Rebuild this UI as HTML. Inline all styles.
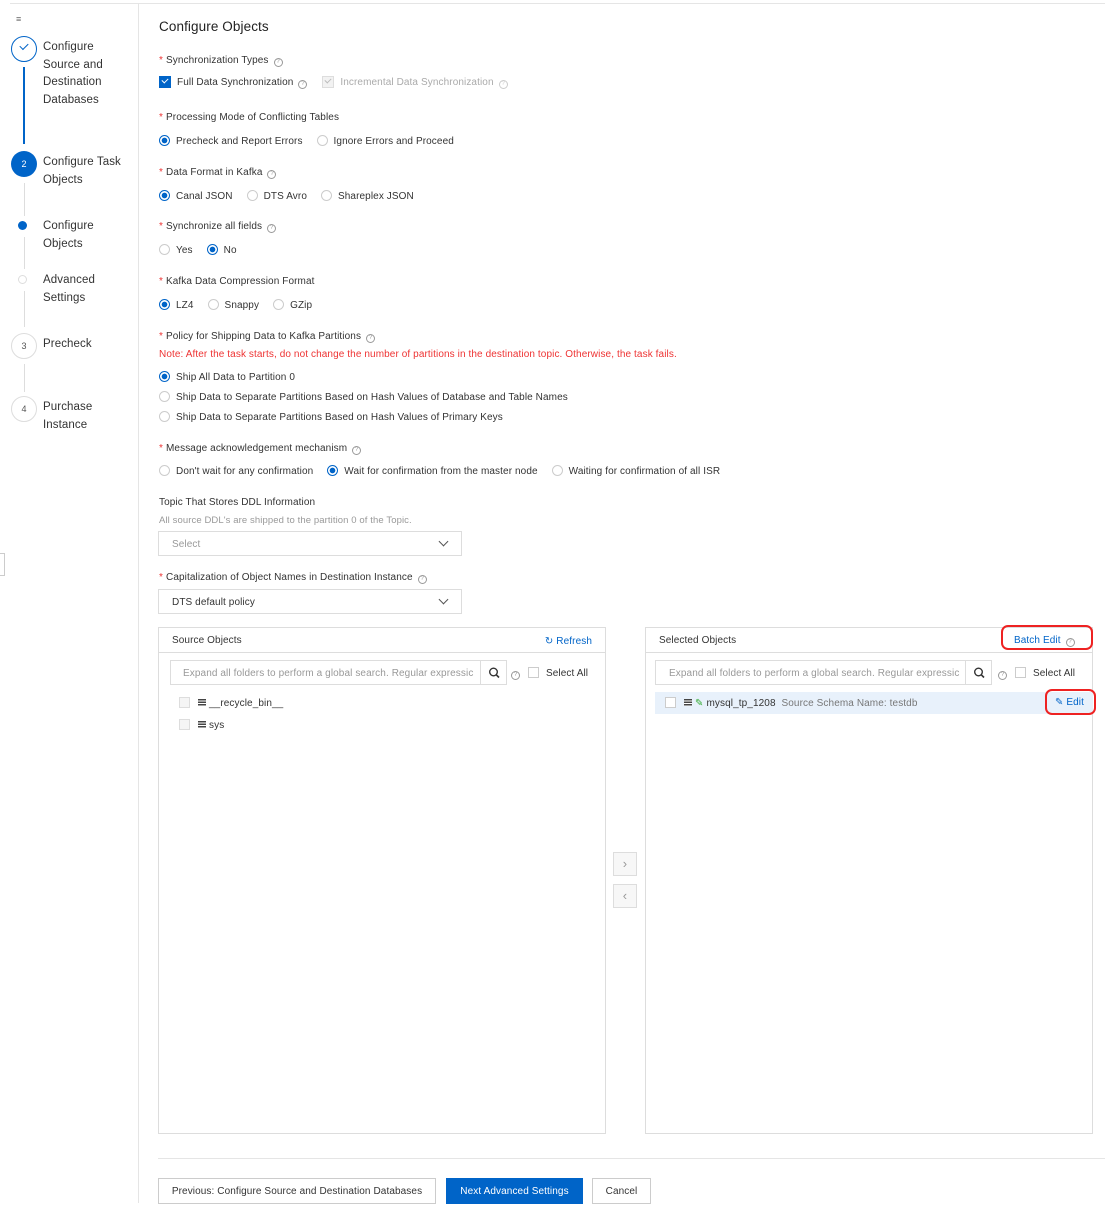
<!DOCTYPE html>
<html><head><meta charset="utf-8"><style>
*{box-sizing:border-box;margin:0;padding:0}
body{width:1105px;height:1209px;background:#fff;font-family:"Liberation Sans",sans-serif;color:#333;position:relative;overflow:hidden;font-size:10px;letter-spacing:0.1px}
.a{position:absolute;white-space:nowrap}
.st{font-size:11.5px;color:#333;line-height:17.5px;letter-spacing:0.1px}
.lbl{font-size:10px;color:#333;margin-top:1px}
.req{color:#e33;margin-right:3px}
.q{display:inline-block;width:9px;height:9px;border:1px solid #999;border-radius:50%;font-size:6px;line-height:7px;text-align:center;color:#999;vertical-align:0px;margin-left:5px;letter-spacing:0}
.r{display:inline-block;width:11px;height:11px;border:1px solid #ccc;border-radius:50%;vertical-align:-2px;margin-right:6px;background:#fff}
.r.on{border-color:#0064c8;background:radial-gradient(circle,#0064c8 0 2.6px,#fff 3px)}
.opt{margin-right:14px}
.sel{position:absolute;border:1px solid #ddd;height:25px;font-size:10px;padding:7px 13px}
.chev{position:absolute;right:14px;top:6px;width:7px;height:7px;border-right:1.3px solid #555;border-bottom:1.3px solid #555;transform:rotate(45deg)}
.panel{position:absolute;border:1px solid #ddd}
.cb{display:inline-block;width:11px;height:11px;border:1px solid #ccc;background:#fff;vertical-align:-2px}
.btn{position:absolute;top:1178px;height:26px;border:1px solid #ccc;font-size:10px;text-align:center;line-height:25px;background:#fff}
.dbi{display:inline-block;width:8px;height:7px;background:repeating-linear-gradient(#444 0 1.5px,#fff 1.5px 2.5px);vertical-align:0;margin-right:3px}
.ph{white-space:nowrap}
</style></head><body>
<div class="a" style="left:10px;top:3px;width:1095px;height:1px;background:#e5e5e5"></div>
<div class="a" style="left:138px;top:3px;width:1px;height:1200px;background:#e5e5e5"></div>
<div class="a" style="left:0;top:553px;width:5px;height:23px;border:1px solid #ccc;border-left:none"></div>
<!-- sidebar -->
<div class="a" style="left:16px;top:14px;font-size:9px;color:#666">≡</div>
<div class="a" style="left:11px;top:36px;width:26px;height:26px;border:1.3px solid #0064c8;border-radius:50%"></div>
<div class="a" style="left:20px;top:43px;width:8px;height:5px;border-left:1.3px solid #0064c8;border-bottom:1.3px solid #0064c8;transform:rotate(-45deg)"></div>
<div class="a st" style="left:43px;top:39px">Configure<br>Source and<br>Destination<br>Databases</div>
<div class="a" style="left:23px;top:67px;width:1.5px;height:77px;background:#0064c8"></div>
<div class="a" style="left:11px;top:151px;width:26px;height:26px;background:#0064c8;border-radius:50%;color:#fff;font-size:9px;text-align:center;line-height:26px">2</div>
<div class="a st" style="left:43px;top:154px">Configure Task<br>Objects</div>
<div class="a" style="left:24px;top:183px;width:1px;height:33px;background:#ddd"></div>
<div class="a" style="left:18px;top:221px;width:9px;height:9px;background:#0064c8;border-radius:50%"></div>
<div class="a st" style="left:43px;top:218px">Configure<br>Objects</div>
<div class="a" style="left:24px;top:237px;width:1px;height:32px;background:#ddd"></div>
<div class="a" style="left:18px;top:275px;width:9px;height:9px;border:1px solid #ddd;border-radius:50%"></div>
<div class="a st" style="left:43px;top:272px">Advanced<br>Settings</div>
<div class="a" style="left:24px;top:291px;width:1px;height:36px;background:#ddd"></div>
<div class="a" style="left:11px;top:333px;width:26px;height:26px;border:1px solid #ddd;border-radius:50%;font-size:9px;text-align:center;line-height:24px;color:#555">3</div>
<div class="a st" style="left:43px;top:336px">Precheck</div>
<div class="a" style="left:24px;top:364px;width:1px;height:28px;background:#ddd"></div>
<div class="a" style="left:11px;top:396px;width:26px;height:26px;border:1px solid #ddd;border-radius:50%;font-size:9px;text-align:center;line-height:24px;color:#555">4</div>
<div class="a st" style="left:43px;top:399px">Purchase<br>Instance</div>
<!-- main -->
<div class="a" style="left:159px;top:19px;font-size:13.5px;color:#222;letter-spacing:0.1px">Configure Objects</div>
<div class="a lbl" style="left:159px;top:54px"><span class="req">*</span>Synchronization Types<span class="q">?</span></div>
<div class="a lbl" style="left:159px;top:75px"><span style="display:inline-block;width:12px;height:12px;background:#0064c8;vertical-align:-3px;margin-right:6px;position:relative"><span style="position:absolute;left:3px;top:2px;width:6px;height:4px;border-left:1.5px solid #fff;border-bottom:1.5px solid #fff;transform:rotate(-45deg)"></span></span>Full Data Synchronization<span class="q">?</span>
<span style="display:inline-block;width:12px;height:12px;background:#f2f2f2;border:1px solid #ddd;vertical-align:-3px;margin:0 6px 0 12px;position:relative"><span style="position:absolute;left:2px;top:1px;width:6px;height:4px;border-left:1.3px solid #bbb;border-bottom:1.3px solid #bbb;transform:rotate(-45deg)"></span></span><span style="color:#aaa">Incremental Data Synchronization</span><span class="q" style="border-color:#ccc;color:#ccc">?</span></div>
<div class="a lbl" style="left:159px;top:111px"><span class="req">*</span>Processing Mode of Conflicting Tables</div>
<div class="a lbl" style="left:159px;top:134px"><span class="r on"></span><span class="opt">Precheck and Report Errors</span><span class="r"></span>Ignore Errors and Proceed</div>
<div class="a lbl" style="left:159px;top:166px"><span class="req">*</span>Data Format in Kafka<span class="q">?</span></div>
<div class="a lbl" style="left:159px;top:189px"><span class="r on"></span><span class="opt">Canal JSON</span><span class="r"></span><span class="opt">DTS Avro</span><span class="r"></span>Shareplex JSON</div>
<div class="a lbl" style="left:159px;top:220px"><span class="req">*</span>Synchronize all fields<span class="q">?</span></div>
<div class="a lbl" style="left:159px;top:243px"><span class="r"></span><span class="opt">Yes</span><span class="r on"></span>No</div>
<div class="a lbl" style="left:159px;top:275px"><span class="req">*</span>Kafka Data Compression Format</div>
<div class="a lbl" style="left:159px;top:298px"><span class="r on"></span><span class="opt">LZ4</span><span class="r"></span><span class="opt">Snappy</span><span class="r"></span>GZip</div>
<div class="a lbl" style="left:159px;top:330px"><span class="req">*</span>Policy for Shipping Data to Kafka Partitions<span class="q">?</span></div>
<div class="a lbl" style="left:159px;top:348px;color:#e33">Note: After the task starts, do not change the number of partitions in the destination topic. Otherwise, the task fails.</div>
<div class="a lbl" style="left:159px;top:370px"><span class="r on"></span>Ship All Data to Partition 0</div>
<div class="a lbl" style="left:159px;top:390px"><span class="r"></span>Ship Data to Separate Partitions Based on Hash Values of Database and Table Names</div>
<div class="a lbl" style="left:159px;top:410px"><span class="r"></span>Ship Data to Separate Partitions Based on Hash Values of Primary Keys</div>
<div class="a lbl" style="left:159px;top:442px"><span class="req">*</span>Message acknowledgement mechanism<span class="q">?</span></div>
<div class="a lbl" style="left:159px;top:464px"><span class="r"></span><span class="opt">Don't wait for any confirmation</span><span class="r on"></span><span class="opt">Wait for confirmation from the master node</span><span class="r"></span>Waiting for confirmation of all ISR</div>
<div class="a lbl" style="left:159px;top:496px">Topic That Stores DDL Information</div>
<div class="a lbl" style="left:159px;top:514px;color:#999;font-size:9.5px">All source DDL's are shipped to the partition 0 of the Topic.</div>
<div class="sel" style="left:158px;top:531px;width:304px;color:#999">Select<span class="chev"></span></div>
<div class="a lbl" style="left:159px;top:571px"><span class="req">*</span>Capitalization of Object Names in Destination Instance<span class="q">?</span></div>
<div class="sel" style="left:158px;top:589px;width:304px">DTS default policy<span class="chev"></span></div>
<!-- source panel -->
<div class="panel" style="left:158px;top:627px;width:448px;height:507px">
 <div style="height:25px;border-bottom:1px solid #ddd;padding:7px 13px;font-size:10px;position:relative">Source Objects<span style="position:absolute;right:13px;top:8px;color:#0064c8">↻ Refresh</span></div>
 <div class="ph" style="position:absolute;left:11px;top:32px;width:311px;height:25px;border:1px solid #ddd;padding:7px 12px;color:#999;font-size:10px;overflow:hidden">Expand all folders to perform a global search. Regular expressic</div>
 <div style="position:absolute;left:321px;top:32px;width:27px;height:25px;border:1px solid #ddd;background:#fff"><svg width="27" height="25" viewBox="0 0 27 25"><circle cx="12.5" cy="11" r="3.8" fill="none" stroke="#333" stroke-width="1.4"/><path d="M15.3 13.8 18 16.5" stroke="#333" stroke-width="1.6"/></svg></div>
 <div style="position:absolute;left:352px;top:39px;font-size:10px"><span class="q" style="margin:0 8px 0 0">?</span><span class="cb" style="margin-right:7px"></span>Select All</div>
 <div style="position:absolute;left:20px;top:69px;font-size:10px"><span class="cb" style="background:#f5f5f5;border-color:#ddd;margin-right:8px"></span><span class="dbi"></span>__recycle_bin__</div>
 <div style="position:absolute;left:20px;top:91px;font-size:10px"><span class="cb" style="background:#f5f5f5;border-color:#ddd;margin-right:8px"></span><span class="dbi"></span>sys</div>
</div>
<div class="a" style="left:613px;top:852px;width:24px;height:24px;border:1px solid #ddd;background:#f7f7f7;color:#999;text-align:center;line-height:22px;font-size:13px">›</div>
<div class="a" style="left:613px;top:884px;width:24px;height:24px;border:1px solid #ddd;background:#f7f7f7;color:#999;text-align:center;line-height:22px;font-size:13px">‹</div>
<!-- selected panel -->
<div class="panel" style="left:645px;top:627px;width:448px;height:507px">
 <div style="height:25px;border-bottom:1px solid #ddd;padding:7px 13px;font-size:10px;position:relative">Selected Objects</div>
 <div class="ph" style="position:absolute;left:9px;top:32px;width:311px;height:25px;border:1px solid #ddd;padding:7px 13px;color:#999;font-size:10px;overflow:hidden">Expand all folders to perform a global search. Regular expressic</div>
 <div style="position:absolute;left:319px;top:32px;width:27px;height:25px;border:1px solid #ddd;background:#fff"><svg width="27" height="25" viewBox="0 0 27 25"><circle cx="12.5" cy="11" r="3.8" fill="none" stroke="#333" stroke-width="1.4"/><path d="M15.3 13.8 18 16.5" stroke="#333" stroke-width="1.6"/></svg></div>
 <div style="position:absolute;left:352px;top:39px;font-size:10px"><span class="q" style="margin:0 8px 0 0">?</span><span class="cb" style="margin-right:7px"></span>Select All</div>
 <div style="position:absolute;left:9px;top:64px;width:438px;height:22px;background:#e8f1fb;padding:5px 10px;font-size:10px"><span class="cb" style="margin-right:8px"></span><span class="dbi"></span><span style="color:#3a3;margin-right:3px">✎</span>mysql_tp_1208 <span style="color:#777;margin-left:3px">Source Schema Name: testdb</span></div>
</div>
<div class="a" style="left:1001px;top:625px;width:92px;height:25px;border:2.5px solid #e22;border-radius:7px"></div>
<div class="a" style="left:1014px;top:635px;color:#0064c8;font-size:10px">Batch Edit<span class="q">?</span></div>
<div class="a" style="left:1045px;top:689px;width:51px;height:26px;border:2.5px solid #e22;border-radius:7px"></div>
<div class="a" style="left:1055px;top:697px;color:#0064c8;font-size:10px">✎ Edit</div>
<!-- footer -->
<div class="a" style="left:158px;top:1158px;width:947px;height:1px;background:#e5e5e5"></div>
<div class="btn" style="left:158px;width:278px">Previous: Configure Source and Destination Databases</div>
<div class="btn" style="left:446px;width:137px;background:#0064c8;border-color:#0064c8;color:#fff">Next Advanced Settings</div>
<div class="btn" style="left:592px;width:59px">Cancel</div>
</body></html>
